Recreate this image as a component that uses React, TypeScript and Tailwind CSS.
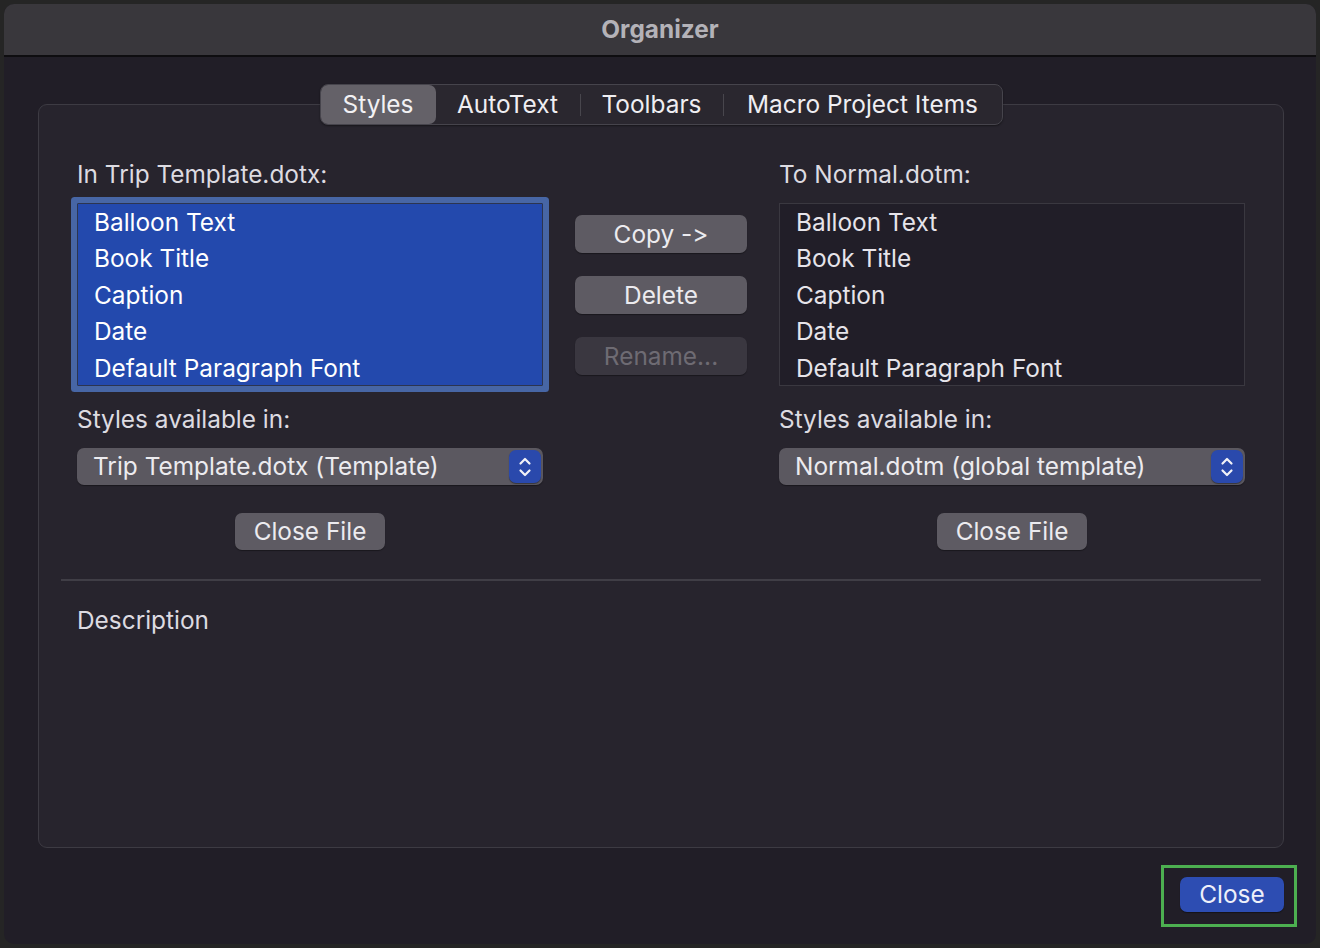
import React from "react";

const items = ["Balloon Text", "Book Title", "Caption", "Date", "Default Paragraph Font"];
const tabs = [
  { label: "Styles", w: "w-[115px]" },
  { label: "AutoText", w: "w-[144px]" },
  { label: "Toolbars", w: "w-[142px]" },
  { label: "Macro Project Items", w: "w-[278px]" },
];

const Stepper = () => (
  <div className="w-[32px] h-[33px] rounded-[7px] bg-[#2a49ac] flex items-center justify-center shadow-[0_1px_1px_rgba(0,0,0,0.4)]">
    <svg width="14" height="24" viewBox="0 0 14 24" fill="none" stroke="#f2f2f7" strokeWidth="2.2" strokeLinecap="round" strokeLinejoin="round">
      <path d="M2.5 8.5 L7 4 L11.5 8.5" />
      <path d="M2.5 15.5 L7 20 L11.5 15.5" />
    </svg>
  </div>
);

const Select = ({ value }: { value: string }) => (
  <div className="h-[37px] rounded-[7px] bg-[#5b5860] flex items-center justify-between pl-[16px] pr-[2px] shadow-[0_1px_1px_rgba(0,0,0,0.35)]">
    <span className="text-[24.4px] text-[#ecebef]">{value}</span>
    <Stepper />
  </div>
);

const PushButton = ({ label, disabled, className }: { label: string; disabled?: boolean; className?: string }) => (
  <div
    className={`h-[38px] rounded-[7px] flex items-center justify-center text-[24.4px] shadow-[0_1px_1px_rgba(0,0,0,0.35)] ${
      disabled ? "bg-[#3a3740] text-[#6e6b73]" : "bg-[#5e5b63] text-[#ecebef]"
    } ${className ?? ""}`}
  >
    {label}
  </div>
);

const App = () => {
  return (
    <div
      className="w-[1320px] h-[948px] bg-[#252525] p-[4px] overflow-hidden [font-feature-settings:'calt'_0]"
      style={{ fontFamily: "Inter, 'Liberation Sans', sans-serif" }}
    >
      <div className="w-full h-full rounded-[10px] overflow-hidden bg-[#211e27] flex flex-col">
        {/* title bar */}
        <div className="h-[53px] shrink-0 bg-[#39373c] flex items-center justify-center border-b-2 border-[#0e0d10]">
          <span className="text-[24.4px] font-bold text-[#b4b2b8]">Organizer</span>
        </div>

        <div className="flex-1 flex flex-col pl-[34px] pr-[32px]">
          {/* group box */}
          <div className="mt-[47px] h-[744px] rounded-[9px] border border-[#3d3b43] bg-[#27242d] flex flex-col">
            {/* tabs */}
            <div className="-mt-[21px] self-center h-[41px] rounded-[8px] border border-[#46444c] bg-[#2a272f] flex items-center shadow-[0_1px_2px_rgba(0,0,0,0.4)]">
              {tabs.map((t, i) => (
                <div key={t.label} className="flex items-center h-full">
                  {i > 1 && <div className="w-px h-[22px] bg-[#48464d]" />}
                  <div
                    className={`${t.w} h-full flex items-center justify-center text-[24.4px] ${
                      i === 0 ? "bg-[#646168] rounded-[7px] text-[#f2f1f4]" : "text-[#efeef2]"
                    }`}
                  >
                    {t.label}
                  </div>
                </div>
              ))}
            </div>

            <div className="grid grid-cols-[466px_1fr_466px] gap-x-[32px] px-[38px] mt-[34px]">
              {/* left */}
              <div className="flex flex-col">
                <div className="h-[30px] flex items-center text-[24.4px] text-[#dddbe1]">In Trip Template.dotx:</div>
                <div className="mt-[14px] h-[183px] border border-[#2c3550] bg-[#2349ad] rounded-[1px] ring-[6px] ring-[#4766a5] flex flex-col pl-[16px]">
                  {items.map((it) => (
                    <div key={it} className="h-[36.5px] flex items-center text-[24.4px] text-white">
                      {it}
                    </div>
                  ))}
                </div>
                <div className="mt-[18px] h-[30px] flex items-center text-[24.4px] text-[#dddbe1]">Styles available in:</div>
                <div className="mt-[14px]">
                  <Select value="Trip Template.dotx (Template)" />
                </div>
                <div className="mt-[28px] flex justify-center">
                  <PushButton label="Close File" className="w-[150px] !h-[37px]" />
                </div>
              </div>

              {/* middle */}
              <div className="flex flex-col gap-[23px] pt-[56px]">
                <PushButton label="Copy ->" />
                <PushButton label="Delete" />
                <PushButton label="Rename..." disabled />
              </div>

              {/* right */}
              <div className="flex flex-col">
                <div className="h-[30px] flex items-center text-[24.4px] text-[#dddbe1]">To Normal.dotm:</div>
                <div className="mt-[14px] h-[183px] border border-[#3a3840] bg-[#211e28] flex flex-col pl-[16px]">
                  {items.map((it) => (
                    <div key={it} className="h-[36.5px] flex items-center text-[24.4px] text-[#e6e4ea]">
                      {it}
                    </div>
                  ))}
                </div>
                <div className="mt-[18px] h-[30px] flex items-center text-[24.4px] text-[#dddbe1]">Styles available in:</div>
                <div className="mt-[14px]">
                  <Select value="Normal.dotm (global template)" />
                </div>
                <div className="mt-[28px] flex justify-center">
                  <PushButton label="Close File" className="w-[150px] !h-[37px]" />
                </div>
              </div>
            </div>

            <div className="mx-[22px] mt-[29px] h-[2px] bg-[#403e46]" />
            <div className="px-[38px] mt-[24px] h-[30px] flex items-center text-[24.4px] text-[#dddbe1]">Description</div>
          </div>

          {/* footer */}
          <div className="flex justify-end mt-[17px] -mr-[13px]">
            <div className="border-[3px] border-[#4caf50] pt-[9px] pb-[12px] pl-[16px] pr-[10px]">
              <div className="w-[104px] h-[35px] rounded-[7px] bg-[#2d4db2] flex items-center justify-center text-[24.4px] text-[#eef0fa] shadow-[0_1px_1px_rgba(0,0,0,0.4)]">
                Close
              </div>
            </div>
          </div>
        </div>
      </div>
    </div>
  );
};

export default App;
